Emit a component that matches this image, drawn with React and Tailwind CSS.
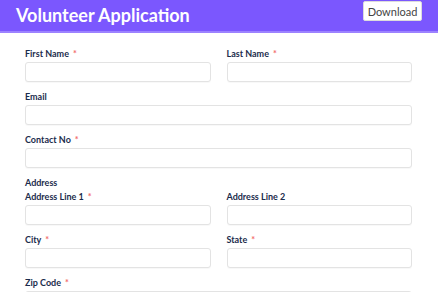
import React from "react";

function Label({ text, req }) {
  return (
    <div className="h-[12px] leading-[12px] text-[9px] font-bold text-[#1b2c4c] whitespace-nowrap">
      {text}
      {req && <span className="text-[#f26b6b] ml-[4px]">*</span>}
    </div>
  );
}

function Field({ label, req }) {
  return (
    <div className="flex flex-col gap-[2px]">
      <Label text={label} req={req} />
      <div className="h-[20px] border border-[#e3e3e3] rounded-[3px] bg-white shadow-[0_1px_1px_rgba(0,0,0,0.03)]" />
    </div>
  );
}

export default function App() {
  return (
    <div className="w-[438px] h-[292px] overflow-hidden bg-white" style={{ fontFamily: "Lato, 'Liberation Sans', sans-serif" }}>
      <div className="h-[33px] bg-[#7b57fe] border-b-[2px] border-[#9c82ff] flex items-start justify-between pl-[16px] pr-[16px]">
        <div className="text-white font-bold text-[18px] leading-[30px]">
          Volunteer Application
        </div>
        <div className="mt-[1px] h-[20px] w-[59px] bg-white border border-[#dcdcdc] rounded-[2px] flex items-center justify-center text-[11px] text-[#444] leading-none">
          Download
        </div>
      </div>
      <div className="px-[25px] pt-[15px] pr-[26px] flex flex-col gap-[9px]">
        <div className="grid grid-cols-2 gap-x-[16px]">
          <Field label="First Name" req />
          <Field label="Last Name" req />
        </div>
        <Field label="Email" />
        <Field label="Contact No" req />
        <div className="flex flex-col gap-[2px]">
          <Label text="Address" />
          <div className="grid grid-cols-2 gap-x-[16px] gap-y-[9px]">
            <Field label="Address Line 1" req />
            <Field label="Address Line 2" />
            <Field label="City" req />
            <Field label="State" req />
          </div>
        </div>
        <Field label="Zip Code" req />
      </div>
    </div>
  );
}
